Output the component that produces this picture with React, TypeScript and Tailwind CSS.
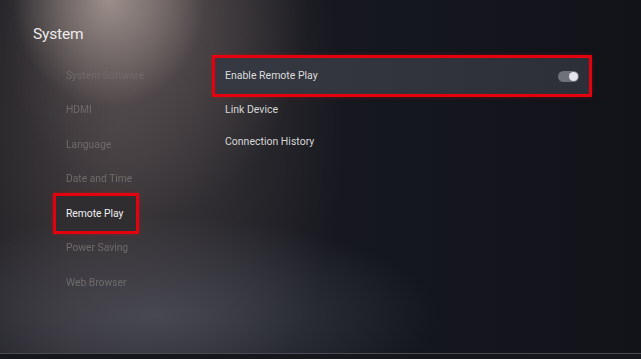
import React from 'react'

const leftItems = ['System Software', 'HDMI', 'Language', 'Date and Time', 'Remote Play', 'Power Saving', 'Web Browser']

const Toggle = (): JSX.Element => (
  <div className="w-[21px] h-[11px] rounded-full bg-[#6e717a] flex items-center justify-end pr-[1px]">
    <div className="w-[9px] h-[9px] rounded-full bg-[#e4e5ee]" />
  </div>
)

export default function App(): JSX.Element {
  return (
    <div
      className="w-[641px] h-[359px] overflow-hidden flex flex-col text-white bg-[#15171e] bg-[radial-gradient(ellipse_15%_30%_at_17%_0%,rgba(180,165,160,0.75),transparent),radial-gradient(ellipse_24%_60%_at_24%_0%,rgba(125,110,108,0.5),transparent),radial-gradient(ellipse_36%_95%_at_18%_35%,rgba(92,84,84,0.6),transparent),radial-gradient(ellipse_44%_28%_at_24%_88%,rgba(84,89,104,0.65),transparent),linear-gradient(to_right,#18181d,#1f1e23_12%,#1a1b21_35%,#15171e_60%,#111319)]"
      style={{ fontFamily: 'Roboto, "Liberation Sans", Arial, sans-serif' }}
    >
      <div className="pt-[24px] pl-[33px] text-[15.5px] leading-[20px] text-[#ecebea] tracking-[-0.01em]">System</div>

      <div className="flex mt-[14px] pl-[56px]">
        <div className="w-[80px] flex flex-col">
          {leftItems.map((item) =>
            item === 'Remote Play' ? (
              <div
                key={item}
                className="h-[34.5px] pl-[10px] flex items-center whitespace-nowrap text-[10.3px] text-[#f0f0f0] bg-[#2f2d30] outline-[3px] outline-solid outline-[#e5000e] shadow-[0_0_5px_2px_rgba(255,0,20,0.45)]"
              >
                {item}
              </div>
            ) : (
              <div
                key={item}
                className="h-[34.5px] pl-[10px] flex items-center whitespace-nowrap text-[10.3px] text-[#6f6b6b] blur-[0.3px]"
              >
                {item}
              </div>
            )
          )}
        </div>

        <div className="ml-[79px] w-[374px] flex flex-col">
          <div className="h-[36px] pl-[10px] pr-[10px] flex items-center justify-between text-[10.5px] text-[#dcdcdc] bg-[linear-gradient(to_right,#363941,#30333b_60%,#2c2f37)] outline-[3px] outline-solid outline-[#e5000e] shadow-[0_0_5px_2px_rgba(255,0,20,0.45)]">
            <span>Enable Remote Play</span>
            <Toggle />
          </div>
          <div className="h-[32px] pl-[10px] flex items-center text-[10.5px] text-[#d6d6d6]">Link Device</div>
          <div className="h-[32px] pl-[10px] flex items-center text-[10.5px] text-[#d6d6d6]">Connection History</div>
        </div>
      </div>

      <div className="flex-1" />
      <div className="h-[1px] bg-[#4a4c52]" />
      <div className="h-[5px] bg-[#16171c]" />
    </div>
  )
}
